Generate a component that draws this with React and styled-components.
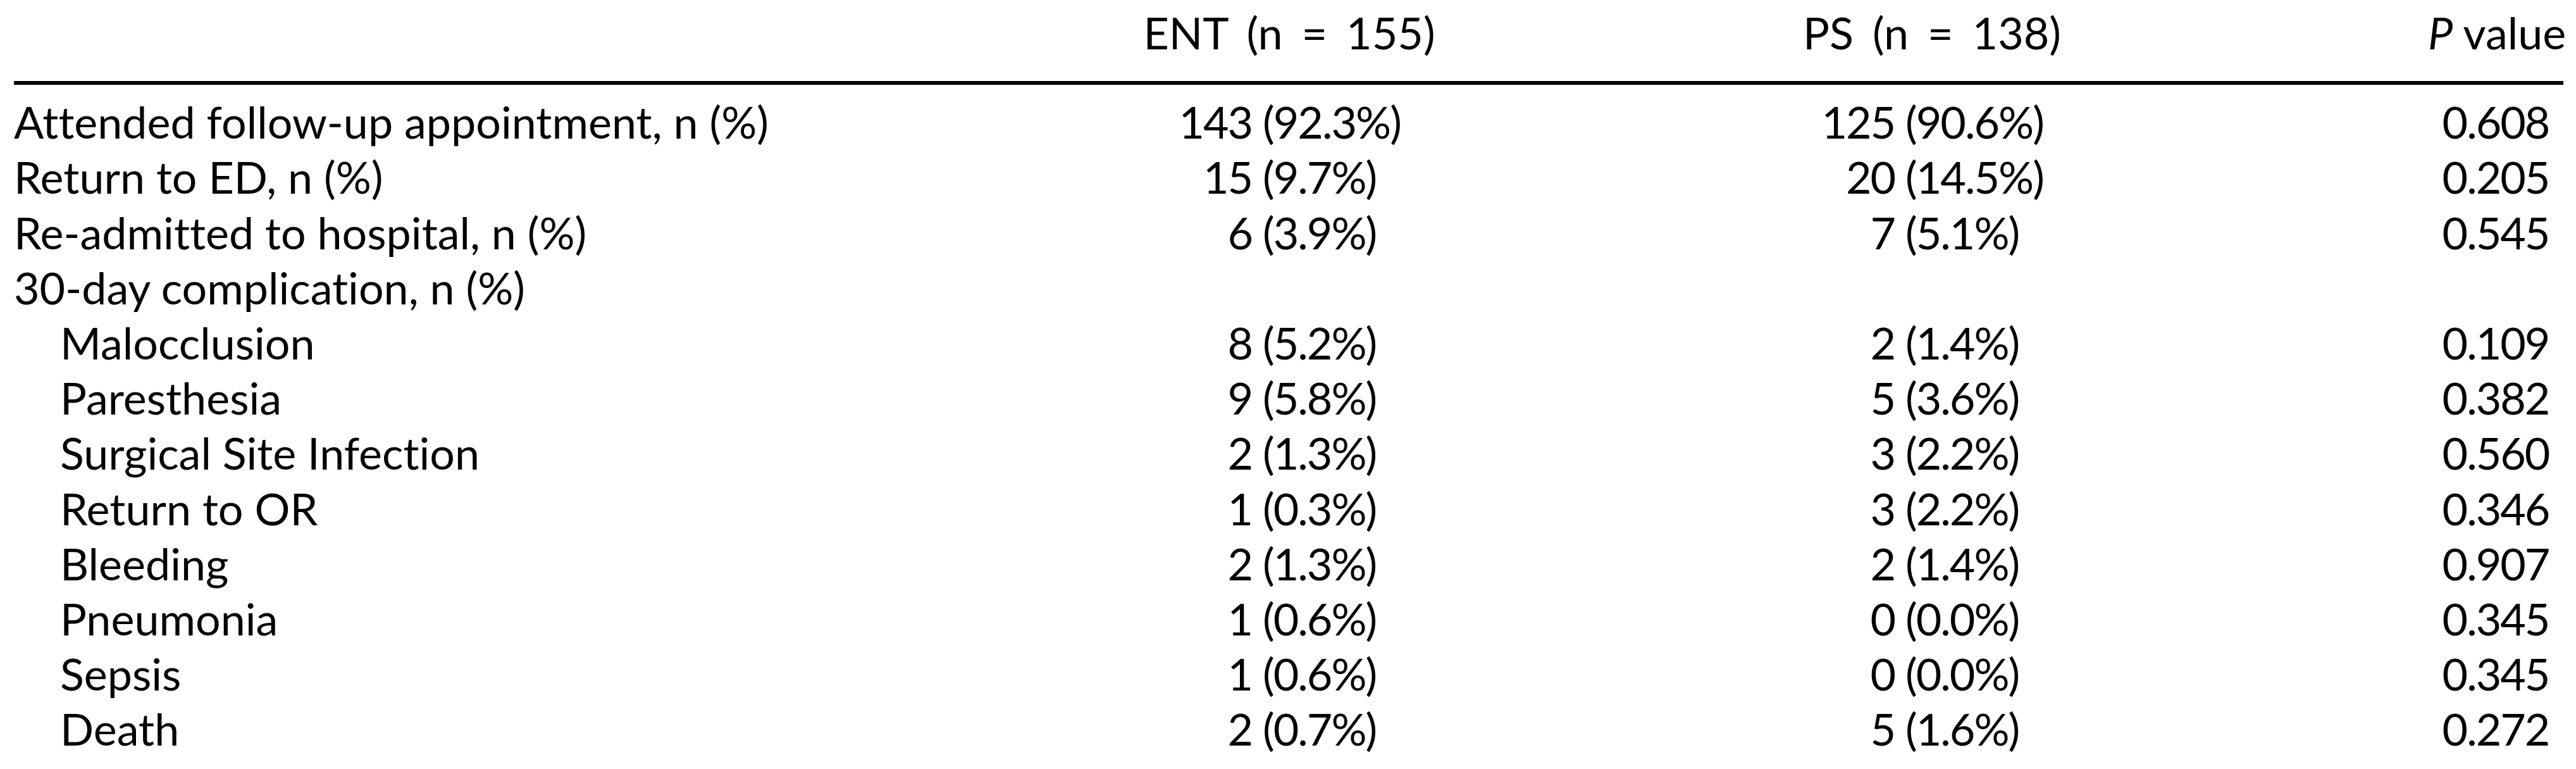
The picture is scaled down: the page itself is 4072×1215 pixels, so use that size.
import React from "react"
import styled, { createGlobalStyle } from "styled-components"

const GlobalStyle = createGlobalStyle`
  html, body {
    margin: 0;
    padding: 0;
    background: #ffffff;
  }
  body {
    font-family: "Lato", "Open Sans", sans-serif;
    color: #000000;
    font-variant-ligatures: none;
  }
`

const Page = styled.div`
  padding: 0 20px 0 22px;
  font-size: 70px;
  line-height: 87.2px;
`

const Row = styled.div`
  display: grid;
  grid-template-columns: 1fr 1016px 1016px 490px;
  align-items: baseline;
`

const HeadRow = styled(Row)`
  padding: 8px 0 33px;
  border-bottom: 6px solid #000;
`

const Body = styled.div`
  padding-top: 15px;
`

const Label = styled.div`
  padding-left: ${(p) => (p.$sub ? "73px" : "0")};
  white-space: nowrap;
`

const HeadCell = styled.div`
  text-align: center;
  white-space: nowrap;
  word-spacing: 12px;
`

const ValueCell = styled.div`
  display: grid;
  grid-template-columns: calc(50% - 42px) 1fr;
  white-space: nowrap;
  letter-spacing: -2px;
`

const Count = styled.span`
  text-align: right;
  padding-right: 0.24em;
`

const Pct = styled.span`
  text-align: left;
`

const PCell = styled.div`
  justify-self: end;
  width: 214px;
  text-align: center;
  white-space: nowrap;
  letter-spacing: ${(p) => (p.$head ? "0" : "-2px")};
`

const rows = [
  { label: "Attended follow-up appointment, n (%)", ent: ["143", "92.3%"], ps: ["125", "90.6%"], p: "0.608" },
  { label: "Return to ED, n (%)", ent: ["15", "9.7%"], ps: ["20", "14.5%"], p: "0.205" },
  { label: "Re-admitted to hospital, n (%)", ent: ["6", "3.9%"], ps: ["7", "5.1%"], p: "0.545" },
  { label: "30-day complication, n (%)" },
  { label: "Malocclusion", sub: true, ent: ["8", "5.2%"], ps: ["2", "1.4%"], p: "0.109" },
  { label: "Paresthesia", sub: true, ent: ["9", "5.8%"], ps: ["5", "3.6%"], p: "0.382" },
  { label: "Surgical Site Infection", sub: true, ent: ["2", "1.3%"], ps: ["3", "2.2%"], p: "0.560" },
  { label: "Return to OR", sub: true, ent: ["1", "0.3%"], ps: ["3", "2.2%"], p: "0.346" },
  { label: "Bleeding", sub: true, ent: ["2", "1.3%"], ps: ["2", "1.4%"], p: "0.907" },
  { label: "Pneumonia", sub: true, ent: ["1", "0.6%"], ps: ["0", "0.0%"], p: "0.345" },
  { label: "Sepsis", sub: true, ent: ["1", "0.6%"], ps: ["0", "0.0%"], p: "0.345" },
  { label: "Death", sub: true, ent: ["2", "0.7%"], ps: ["5", "1.6%"], p: "0.272" },
]

// count and percentage meet at the opening paren, like the printed table
const Value = ({ v }) =>
  v ? (
    <ValueCell>
      <Count>{v[0]}</Count>
      <Pct>({v[1]})</Pct>
    </ValueCell>
  ) : (
    <div />
  )

export default function App() {
  return (
    <>
      <GlobalStyle />
      <Page>
        <HeadRow>
          <div />
          <HeadCell>ENT (n = 155)</HeadCell>
          <HeadCell>PS (n = 138)</HeadCell>
          <PCell $head>
            <i>P</i> value
          </PCell>
        </HeadRow>
        <Body>
          {rows.map((r) => (
            <Row key={r.label}>
              <Label $sub={r.sub}>{r.label}</Label>
              <Value v={r.ent} />
              <Value v={r.ps} />
              {r.p ? <PCell>{r.p}</PCell> : <div />}
            </Row>
          ))}
        </Body>
      </Page>
    </>
  )
}
